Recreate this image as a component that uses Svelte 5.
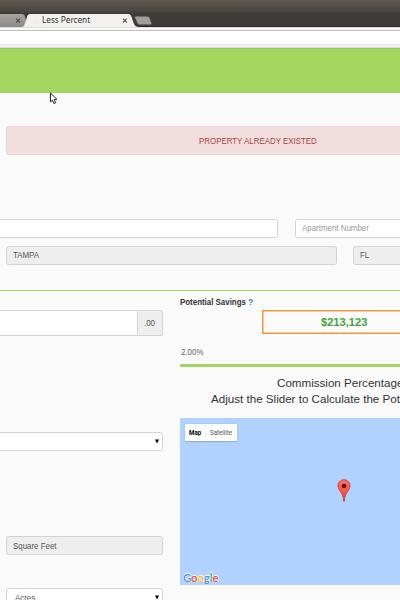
<script lang="ts">
  const logo = [
    ['G', '#4285f4'],
    ['o', '#ea4335'],
    ['o', '#fbbc05'],
    ['g', '#4285f4'],
    ['l', '#34a853'],
    ['e', '#ea4335']
  ];
</script>

<div class="screen">
  <header class="browser">
    <div class="tabs">
      <svg width="400" height="27" viewBox="0 0 400 27" aria-hidden="true">
        <defs>
          <linearGradient id="inactive" x1="0" y1="0" x2="0" y2="1">
            <stop offset="0" stop-color="#a5a4a1" />
            <stop offset="1" stop-color="#8b8a87" />
          </linearGradient>
        </defs>
        <path d="M0 14H22Q24 14 24.8 16L28 27H0Z" fill="url(#inactive)" />
        <path d="M22 27Q24.5 26 25.2 23L27.3 16Q28 14 30 14H128.500Q130.500 14 131.200 16L134 24Q135 26.500 138 27Z" fill="#f2f1f0" />
        <path d="M135.600 16.500H147.500Q149 16.500 149.500 18L151.500 23.500Q151.800 24.500 150.500 24.500H139.500Q138 24.500 137.500 23L135 17.500Q134.800 16.500 135.600 16.500Z" fill="#a09f9c" stroke="#6c6b67" stroke-width=".5" />
        <path d="M16.200 18.700L20 22.500M20 18.700L16.200 22.500" stroke="#4d4d4a" stroke-width="1.100" />
        <path d="M123 18.700L126.800 22.500M126.800 18.700L123 22.500" stroke="#555" stroke-width="1.100" />
        <rect x="33" y="17" width="6" height="7" fill="#eef0e4" />
      </svg>
      <span class="tab-title">Less Percent</span>
    </div>
    <div class="toolbar"></div>
    <div class="address"></div>
    <div class="toolbar-end"></div>
  </header>

  <div class="banner"></div>

  <main>
    <div class="alert"><span class="t">PROPERTY ALREADY EXISTED</span></div>

    <div class="row first">
      <div class="field street"></div>
      <div class="field apartment"><span class="t">Apartment Number</span></div>
    </div>
    <div class="row second">
      <div class="field disabled city"><span class="t">TAMPA</span></div>
      <div class="field disabled state"><span class="t">FL</span></div>
    </div>

    <div class="columns">
      <section class="left">
        <div class="price"><div class="amount"></div><div class="addon"><span class="t">.00</span></div></div>
        <div class="field select type"><svg width="4" height="5" viewBox="0 0 4 5"><path d="M0 .5H4L2 4.500Z" /></svg></div>
        <div class="field disabled feet"><span class="t">Square Feet</span></div>
        <div class="field select acres"><span class="t">Acres</span><svg width="4" height="5" viewBox="0 0 4 5"><path d="M0 .5H4L2 4.500Z" /></svg></div>
      </section>

      <section class="right">
        <div class="label"><span class="t">Potential Savings <i>?</i></span></div>
        <div class="savings"><span class="t">$213,123</span></div>
        <div class="percent"><span class="t">2.00%</span></div>
        <div class="slider"></div>
        <div class="caption">
          <div class="c1"><span class="t">Commission Percentage</span></div>
          <div class="c2"><span class="t">Adjust the Slider to Calculate the Pot</span></div>
        </div>
        <div class="map">
          <div class="map-type"><b><span class="t">Map</span></b><div class="sat"><span class="t">Satellite</span></div></div>
          <svg class="pin" width="14" height="24" viewBox="0 0 14 24">
            <defs>
              <linearGradient id="pin" x1="0" y1="0" x2="0" y2="1">
                <stop offset="0" stop-color="#fb7064" />
                <stop offset="1" stop-color="#f33d30" />
              </linearGradient>
            </defs>
            <path d="M7 .6A6.100 6.100 0 0 0 .9 6.700C.9 9 2 10.500 3.400 12.600C5.200 15.300 6.300 17.500 6.700 22.200H7.300C7.700 17.500 8.800 15.300 10.600 12.600C12 10.500 13.100 9 13.100 6.700A6.100 6.100 0 0 0 7 .6Z" fill="url(#pin)" stroke="#b83b35" stroke-width=".7" />
            <circle cx="7" cy="6.900" r="2.200" fill="#5b100d" />
          </svg>
          <div class="logo">{#each logo as [letter, color]}<span style:color>{letter}</span>{/each}</div>
        </div>
      </section>
    </div>
  </main>

  <svg class="cursor" width="9" height="13" viewBox="0 0 9 13">
    <path d="M1.400 .9V9.900L3.400 8.200L4.900 11.500L6.600 10.800L5.200 7.600L7.900 7.300Z" fill="#fff" stroke="#222" stroke-width="1" />
  </svg>
</div>

<style>
  .screen {
    position: relative;
    width: 400px;
    height: 600px;
    overflow: hidden;
    background: #fafafa;
    font: 14px/12px "Liberation Sans", Arial, sans-serif;
    color: #555;
    white-space: nowrap;
  }
  .screen * { box-sizing: border-box; }
  .t {
    display: block;
    width: max-content;
    transform: scale(.565, .64);
    transform-origin: 0 50%;
  }
  .tabs {
    position: relative;
    height: 27px;
    background: linear-gradient(#5d594f 0, #47453f 12px, #3c3b37 13px, #3c3b37 25.500px, #2d2c29 26px);
  }
  .tabs svg { display: block; }
  .tab-title {
    position: absolute;
    left: 42px;
    top: 14px;
    font: 13.5px/13px "Noto Sans", sans-serif;
    transform: scale(.605, .6);
    transform-origin: 0 50%;
    color: #333;
  }
  .toolbar { height: 4px; background: linear-gradient(#d9d9d7 0 1px, #fff 1px 2px, #f0f0f0 2px 3px, #c4c4c4 3px); }
  .address { height: 13px; background: #fff; }
  .toolbar-end { height: 4px; background: linear-gradient(#e5e5e3 0 1px, #efefed 1px 2px, #f2f2f2 2px 3px, #dadfd5 3px); }
  .banner { height: 45px; background: #a4d65f; border-top: 1px solid #9cc466; border-bottom: 1px solid #a0d65c; }
  .alert {
    width: 509px;
    height: 29px;
    margin: 33px 0 0 6px;
    padding-left: 192px;
    border: 1px solid #efd3d7;
    border-radius: 2px;
    background: #f2dede;
    color: #a94442;
    line-height: 28px;
  }
  .row { display: flex; width: 500px; }
  .first { margin-top: 64px; }
  .second { margin-top: 8px; padding-left: 6px; }
  .field {
    height: 19px;
    flex: none;
    padding: 0 6px;
    border: 1px solid #d3d3d3;
    border-radius: 2.500px;
    background: #fff;
    line-height: 17px;
  }
  .disabled { background: #eee; }
  .street { width: 282px; margin-left: -4px; }
  .apartment { width: 150px; margin-left: 17px; color: #999; }
  .city { width: 331px; }
  .state { width: 140px; margin-left: 16px; }
  .columns {
    display: flex;
    margin-top: 25px;
    height: 310px;
    border-top: 1px solid #a0d65c;
  }
  .left { width: 163px; padding-top: 19px; flex: none; }
  .price { display: flex; height: 26px; }
  .amount { flex: 1; border: 1px solid #d3d3d3; border-width: 1px 0; background: #fff; }
  .addon {
    width: 26px;
    padding-left: 6px;
    border: 1px solid #d3d3d3;
    border-radius: 0 2px 2px 0;
    background: #eee;
    line-height: 24px;
  }
  .select { display: flex; align-items: center; justify-content: flex-end; padding-right: 3px; }
  .select svg { flex: none; }
  .type { width: 167px; margin: 96px 0 0 -4px; }
  .feet { margin: 85px 0 0 6px; line-height: 18px; }
  .acres { margin: 33px 0 0 6px; padding-left: 8px; justify-content: space-between; line-height: 18px; }
  .right { width: 330px; flex: none; margin-left: 16.500px; padding-top: 5px; }
  .label { height: 14px; color: #333; font-weight: bold; line-height: 12px; }
  .label i { color: #337ab7; font-style: normal; }
  .savings {
    width: 166px;
    height: 24px;
    margin-left: 82.500px;
    padding-left: 58px;
    border: 1px solid #f2963b;
    box-shadow: inset 0 0 0 .5px #f2963b;
    color: #42a33d;
    font-size: 19px;
    font-weight: bold;
    line-height: 22px;
  }
  .savings .t { transform: scale(.585, .61); }
  .percent { margin: 12px 0 0 1.500px; color: #667; line-height: 12px; height: 12px; }
  .slider { height: 3px; margin-top: 6px; background: #a4d65f; border-radius: 1px; }
  .caption { padding-top: 8px; color: #333; font-size: 20px; line-height: 16px; }
  .caption .t { transform: scale(.58, .59); }
  .c1 { padding-left: 97px; }
  .c2 { padding-left: 31px; }
  .map { position: relative; height: 167px; margin-top: 11px; background: #b1d1ff; }
  .map-type {
    position: absolute;
    left: 5px;
    top: 6px;
    display: flex;
    height: 17px;
    width: 52px;
    border-radius: 1px;
    background: #fff;
    box-shadow: 0 .5px 1.500px #0003;
    font: 11px/17px Roboto, sans-serif;
  }
  .map-type .t { transform: scale(.56, .58); }
  .map-type b { width: 21px; padding-left: 4.500px; color: #000; border-right: 1px solid #f3f3f3; }
  .sat { padding-left: 4.500px; color: #565656; }
  .pin { position: absolute; left: 157.600px; top: 60.500px; }
  .logo {
    position: absolute;
    left: 3px;
    top: 151px;
    font: 600 20px/16px Lato, sans-serif;
    transform: scale(.56, .6);
    transform-origin: 0 50%;
    text-shadow: 0 0 2px #fff, 1px 0 1px #fff, -1px 0 1px #fff, 0 1px 1px #fff, 0 -1px 1px #fff;
  }
  .logo span { position: relative; }
  .cursor { position: absolute; left: 49px; top: 92px; }
</style>
